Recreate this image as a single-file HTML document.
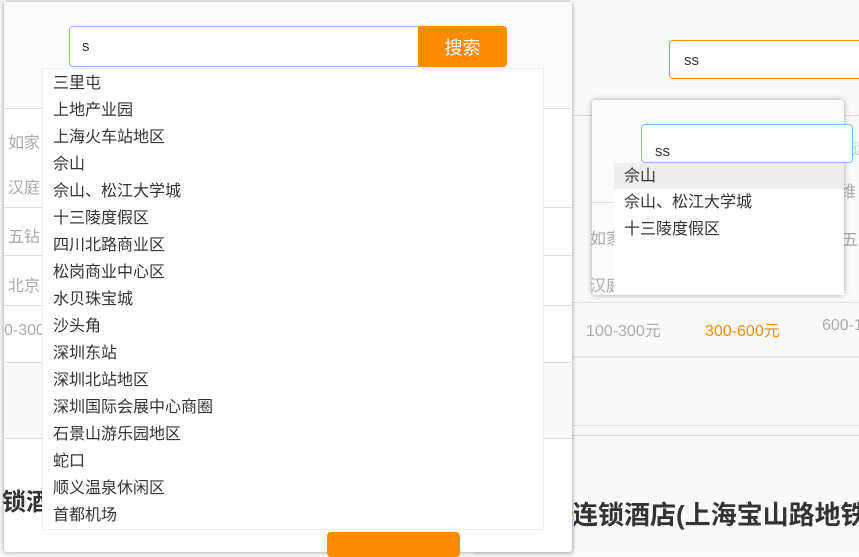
<!DOCTYPE html>
<html><head><meta charset="utf-8"><style>
body{margin:0;width:859px;height:555px;overflow:hidden;background:#f7f7f7;font-family:"Liberation Sans","Noto Sans CJK SC",sans-serif;position:relative}
.a{position:absolute;white-space:nowrap}
.g{color:#aaa;font-size:16px}
.line{position:absolute;height:1px;background:#ddd}
.dd div{height:27px;line-height:27px;padding-left:10px;font-size:16px;color:#333}
</style></head><body>
<div class="a" style="left:572px;top:0;width:287px;height:555px;background:#f9f9f9"></div>
<div class="a" style="left:669px;top:40px;width:200px;height:37px;border:1px solid #ff8c00;border-radius:4px;background:#fff"></div>
<div class="a" style="left:684px;top:52px;font-size:15px;color:#333">ss</div>
<div class="line" style="left:572px;top:115px;width:287px"></div>
<div class="line" style="left:572px;top:302px;width:287px"></div>
<div class="line" style="left:572px;top:356px;width:287px;background:#e4e4e4;height:2px"></div>
<div class="line" style="left:572px;top:425px;width:287px"></div>
<div class="line" style="left:572px;top:435px;width:287px"></div>
<div class="a" style="left:586px;top:317px;font-size:16px;color:#aaa">100-300元</div>
<div class="a" style="left:705px;top:317px;font-size:16px;color:#ff8c00">300-600元</div>
<div class="a" style="left:822px;top:317px;font-size:16px;color:#aaa">600-1</div>
<div class="a" style="left:852px;top:135px;font-size:16px;color:#ccc">运</div>
<div class="a" style="left:840px;top:178px;font-size:16px;color:#aaa">维</div>
<div class="a" style="left:842px;top:226px;font-size:16px;color:#aaa">五</div>
<div class="a" style="left:572px;top:495px;font-size:26px;font-weight:bold;color:#333">连锁酒店(上海宝山路地铁</div>
<div class="a" style="left:474px;top:500px;width:100px;height:55px;background:#e8ece8;overflow:hidden"><div class="a" style="left:10px;top:20px;width:90px;height:8px;background:#f5a040;transform:rotate(-18deg)"></div></div>
<div class="a" style="left:592px;top:100px;width:252px;height:195px;background:#fafafa;box-shadow:0 0 6px rgba(0,0,0,.35);border-radius:3px"></div>
<div class="a" style="left:592px;top:202px;width:252px;height:1px;background:#ddd"></div>
<div class="a" style="left:590px;top:225px;font-size:16px;color:#aaa">如家</div>
<div class="a" style="left:590px;top:272px;font-size:16px;color:#aaa">汉庭</div>
<div class="a" style="left:641px;top:124px;width:210px;height:37px;border:1px solid #80b8f8;border-radius:4px;background:#fff"></div>
<div class="a" style="left:655px;top:143px;font-size:15px;color:#333">ss</div>
<div class="a dd" style="left:614px;top:163px;width:230px;height:132px;background:#fff">
<div style="background:#eee;height:26px">佘山</div><div>佘山、松江大学城</div><div>十三陵度假区</div></div>
<div class="a" style="left:4px;top:2px;width:568px;height:550px;background:#fff;box-shadow:0 0 5px rgba(0,0,0,.4);border-radius:3px"></div>
<div class="a" style="left:4px;top:2px;width:568px;height:106px;background:#fafafa"></div>
<div class="line" style="left:4px;top:108px;width:568px"></div>
<div class="line" style="left:4px;top:207px;width:568px"></div>
<div class="line" style="left:4px;top:255px;width:568px"></div>
<div class="line" style="left:4px;top:305px;width:568px"></div>
<div class="a" style="left:4px;top:362px;width:568px;height:75px;background:#f9f9f9;border-top:1px solid #ddd;border-bottom:1px solid #ddd"></div>
<div class="a g" style="left:8px;top:129px">如家</div>
<div class="a g" style="left:8px;top:174px">汉庭</div>
<div class="a g" style="left:8px;top:223px">五钻</div>
<div class="a g" style="left:8px;top:272px">北京</div>
<div class="a g" style="left:4px;top:322px">0-300</div>
<div class="a" style="left:2px;top:482px;font-size:24px;font-weight:bold;color:#333">锁酒</div>
<div class="a" style="left:69px;top:26px;width:350px;height:41px;border:1px solid #80b8f8;border-radius:4px 0 0 4px;background:#fff;box-sizing:border-box"></div>
<div class="a" style="left:82px;top:38px;font-size:15px;color:#333">s</div>
<div class="a" style="left:418px;top:26px;width:89px;height:41px;background:#ff8c00;border-radius:0 4px 4px 0;color:#fff;font-size:18px;text-align:center;line-height:44px">搜索</div>
<div class="a dd" style="left:42px;top:68px;width:502px;height:462px;background:#fff;border:1px solid #eee;box-sizing:border-box;padding-top:1px">
<div>三里屯</div><div>上地产业园</div><div>上海火车站地区</div><div>佘山</div><div>佘山、松江大学城</div><div>十三陵度假区</div><div>四川北路商业区</div><div>松岗商业中心区</div><div>水贝珠宝城</div><div>沙头角</div><div>深圳东站</div><div>深圳北站地区</div><div>深圳国际会展中心商圈</div><div>石景山游乐园地区</div><div>蛇口</div><div>顺义温泉休闲区</div><div>首都机场</div></div>
<div class="a" style="left:327px;top:532px;width:133px;height:25px;background:#ff8c00;border-radius:4px"></div>
</body></html>
